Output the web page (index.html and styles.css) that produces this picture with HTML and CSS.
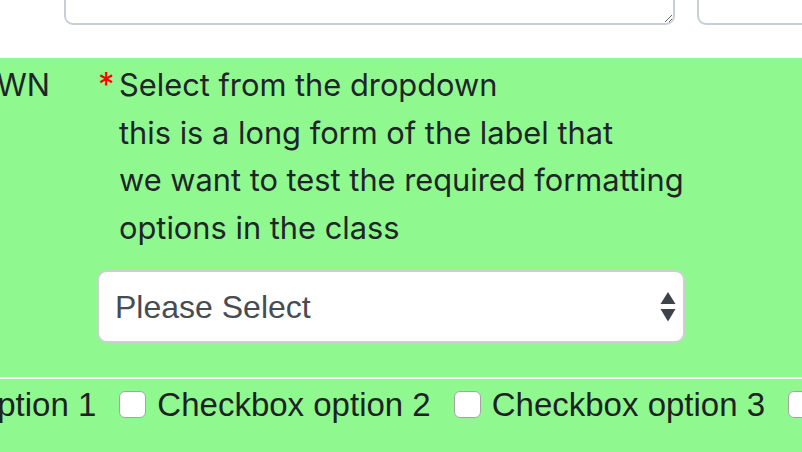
FILE: index.html
```html
<!DOCTYPE html>
<html lang="en">
<head>
<meta charset="utf-8">
<title>Form</title>
<link rel="stylesheet" href="styles.css">
</head>
<body>
<div class="top">
  <textarea class="ta ta-main"></textarea>
  <textarea class="ta ta-side"></textarea>
</div>
<div class="green">
  <div class="row">
    <div class="side-label"><span>DROPDOWN</span></div>
    <div class="field">
      <div class="label">
        <span class="req">*</span>
        <span class="label-text">Select from the dropdown<br>this is a long form of the label that<br>we want to test the required formatting<br>options in the class</span>
      </div>
      <div class="select-wrap">
        <select class="select">
          <option>Please Select</option>
        </select>
        <svg class="arrows" width="16" height="32" viewBox="0 0 16 32" aria-hidden="true">
          <polygon points="8,0 15.5,12 0.5,12" fill="#3d4349"/>
          <polygon points="0.5,17 15.5,17 8,29.5" fill="#3d4349"/>
        </svg>
      </div>
    </div>
  </div>
  <div class="divider"></div>
  <div class="checks">
    <label class="check"><input type="checkbox"><span>Checkbox option 1</span></label>
    <label class="check"><input type="checkbox"><span>Checkbox option 2</span></label>
    <label class="check"><input type="checkbox"><span>Checkbox option 3</span></label>
    <label class="check"><input type="checkbox"><span>Checkbox option 4</span></label>
  </div>
</div>
</body>
</html>
```
FILE: styles.css
```css
html, body {
  margin: 0;
  padding: 0;
  background: #ffffff;
  overflow: hidden;
}
body {
  width: 802px;
  height: 452px;
  font-family: Inter, "Noto Sans", sans-serif;
  color: #212529;
}
.top {
  height: 58px;
  box-sizing: border-box;
  padding-bottom: 33px;
  display: flex;
  align-items: flex-end;
  overflow: hidden;
}
.ta {
  flex: none;
  height: 90px;
  box-sizing: border-box;
  border: 2px solid #c9cdd6;
  border-radius: 9px;
  background: #fff;
  margin: 0;
}
.ta-main {
  margin-left: 64px;
  width: 611px;
}
.ta-side {
  margin-left: 22px;
  width: 200px;
  resize: none;
}
.green {
  background: #8ff98f;
  height: 394px;
  overflow: hidden;
  padding-top: 3px;
  box-sizing: border-box;
}
.row {
  display: flex;
}
.side-label {
  flex: none;
  width: 97px;
  box-sizing: border-box;
  padding-right: 47px;
  display: flex;
  justify-content: flex-end;
  overflow: hidden;
  white-space: nowrap;
  font-size: 30.8px;
  line-height: 47.5px;
}
.field {
  flex: none;
  width: 588px;
}
.label {
  display: flex;
  font-size: 30.8px;
  line-height: 47.5px;
}
.req {
  flex: none;
  width: 22px;
  padding-left: 1px;
  box-sizing: border-box;
  color: #ff0000;
  font-size: 33px;
}
.label-text {
  white-space: nowrap;
}
.select-wrap {
  position: relative;
  margin-top: 19px;
  height: 73px;
}
.select {
  appearance: none;
  -webkit-appearance: none;
  width: 588px;
  height: 73px;
  box-sizing: border-box;
  border: 2px solid #cdd0d3;
  border-radius: 10px;
  background: #ffffff;
  padding: 0 0 0 16px;
  font-family: "Liberation Sans", Arial, sans-serif;
  font-size: 32px;
  color: #464c52;
  margin: 0;
}
.arrows {
  position: absolute;
  right: 9px;
  top: 22px;
}
.divider {
  margin-top: 34px;
  height: 2px;
  background: #ffffff;
}
.checks {
  display: flex;
  gap: 23px;
  margin-left: -215px;
  margin-top: 12px;
  white-space: nowrap;
}
.check {
  display: flex;
  align-items: center;
  gap: 11px;
  font-family: "Liberation Sans", Arial, sans-serif;
  font-size: 33px;
  line-height: 26px;
  color: #1f2225;
}
.check input {
  appearance: none;
  -webkit-appearance: none;
  margin: 0;
  flex: none;
  width: 27px;
  height: 27px;
  box-sizing: border-box;
  border: 1.5px solid #a4a4a4;
  border-radius: 6px;
  background: #ffffff;
}
```
